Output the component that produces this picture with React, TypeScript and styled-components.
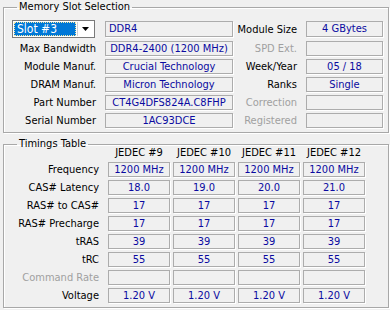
import React from 'react';
import styled, { createGlobalStyle } from 'styled-components';

const GlobalStyle = createGlobalStyle`
  html, body {
    margin: 0;
    padding: 0;
    background: #f0f0f0;
  }
  body {
    font-family: "DejaVu Sans Condensed", "DejaVu Sans", "Liberation Sans", sans-serif;
    font-stretch: condensed;
    font-size: 11px;
    color: #000;
  }
`;

const Page = styled.div`
  width: 390px;
  height: 310px;
  padding: 0 1px 0 3px;
  box-sizing: border-box;
`;

const Group = styled.fieldset<{ $gap?: number }>`
  margin: ${(p) => p.$gap || 0}px 0 0 0;
  padding: 6px 6px 4px 8px;
  border: 1px solid #a8a8a8;
  box-shadow: inset 1px 1px 0 #fff, 1px 1px 0 #fff;
  min-width: 0;
`;

const Title = styled.legend`
  padding: 0 2px;
  margin-left: 5px;
  line-height: 14px;
  height: 14px;
`;

const SlotGrid = styled.div`
  display: grid;
  grid-template-columns: 93px 128px 73px 77px;
  grid-template-rows: 18px repeat(5, 15px);
  row-gap: 3px;
  align-items: center;
`;

const Label = styled.div<{ $disabled?: boolean }>`
  text-align: right;
  padding-right: 9px;
  white-space: nowrap;
  line-height: 15px;
  color: ${(p) => (p.$disabled ? '#a0a0a0' : '#000')};
`;

const Field = styled.div<{ $align?: 'left' | 'center'; $tall?: boolean }>`
  height: ${(p) => (p.$tall ? 16 : 15)}px;
  box-sizing: border-box;
  border: 1px solid #acacac;
  box-shadow: 1px 1px 0 #fff;
  color: #0a0aa0;
  text-align: ${(p) => p.$align || 'center'};
  padding: 0 ${(p) => (p.$align === 'left' ? 3 : 0)}px;
  line-height: ${(p) => (p.$tall ? 14 : 13)}px;
  white-space: nowrap;
  overflow: hidden;
`;

const Select = styled.div`
  width: 83px;
  height: 18px;
  box-sizing: border-box;
  border: 1px solid #7a7a7a;
  background: #fff;
  display: flex;
  padding: 1px;
  gap: 1px;
`;

const SelectValue = styled.div`
  flex: 1;
  background: #0078d7;
  color: #fff;
  border: 1px dotted #f7e8a0;
  line-height: 12px;
  padding-left: 2px;
  font-size: 12px;
`;

const SelectButton = styled.div`
  width: 15px;
  display: flex;
  align-items: center;
  justify-content: center;
  background: #fff;
  border-left: 1px solid #d0d0d0;
`;

const TimingGrid = styled.div`
  display: grid;
  grid-template-columns: 93px repeat(4, 62px);
  grid-template-rows: 12px repeat(8, 15px);
  column-gap: 3px;
  row-gap: 3px;
  align-items: center;
  margin-top: -10px;
  & > :nth-child(5n + 1) {
    margin-right: -3px;
  }
`;

const ColHead = styled.div`
  text-align: center;
  line-height: 12px;
  white-space: nowrap;
`;

const Arrow = () => (
  <svg width="7" height="4" viewBox="0 0 7 4">
    <path d="M0 0H7L3.5 4Z" fill="#000" />
  </svg>
);

type SlotRow = { label: string; value: string; rlabel: string; rvalue: string; rdisabled?: boolean };

const slotRows: SlotRow[] = [
  { label: 'Max Bandwidth', value: 'DDR4-2400 (1200 MHz)', rlabel: 'SPD Ext.', rvalue: '', rdisabled: true },
  { label: 'Module Manuf.', value: 'Crucial Technology', rlabel: 'Week/Year', rvalue: '05 / 18' },
  { label: 'DRAM Manuf.', value: 'Micron Technology', rlabel: 'Ranks', rvalue: 'Single' },
  { label: 'Part Number', value: 'CT4G4DFS824A.C8FHP', rlabel: 'Correction', rvalue: '', rdisabled: true },
  { label: 'Serial Number', value: '1AC93DCE', rlabel: 'Registered', rvalue: '', rdisabled: true },
];

const jedec = ['JEDEC #9', 'JEDEC #10', 'JEDEC #11', 'JEDEC #12'];

const timings: { label: string; values: string[]; disabled?: boolean }[] = [
  { label: 'Frequency', values: ['1200 MHz', '1200 MHz', '1200 MHz', '1200 MHz'] },
  { label: 'CAS# Latency', values: ['18.0', '19.0', '20.0', '21.0'] },
  { label: 'RAS# to CAS#', values: ['17', '17', '17', '17'] },
  { label: 'RAS# Precharge', values: ['17', '17', '17', '17'] },
  { label: 'tRAS', values: ['39', '39', '39', '39'] },
  { label: 'tRC', values: ['55', '55', '55', '55'] },
  { label: 'Command Rate', values: ['', '', '', ''], disabled: true },
  { label: 'Voltage', values: ['1.20 V', '1.20 V', '1.20 V', '1.20 V'] },
];

export default function App() {
  return (
    <Page>
      <GlobalStyle />
      <Group>
        <Title>Memory Slot Selection</Title>
        <SlotGrid>
          <Select>
            <SelectValue>Slot #3</SelectValue>
            <SelectButton>
              <Arrow />
            </SelectButton>
          </Select>
          <Field $align="left" $tall>
            DDR4
          </Field>
          <Label>Module Size</Label>
          <Field $tall>4 GBytes</Field>
          {slotRows.map((r) => (
            <React.Fragment key={r.label}>
              <Label>{r.label}</Label>
              <Field>{r.value}</Field>
              <Label $disabled={r.rdisabled}>{r.rlabel}</Label>
              <Field>{r.rvalue}</Field>
            </React.Fragment>
          ))}
        </SlotGrid>
      </Group>
      <Group $gap={4}>
        <Title>Timings Table</Title>
        <TimingGrid>
          <div />
          {jedec.map((j) => (
            <ColHead key={j}>{j}</ColHead>
          ))}
          {timings.map((t) => (
            <React.Fragment key={t.label}>
              <Label $disabled={t.disabled}>{t.label}</Label>
              {t.values.map((v, i) => (
                <Field key={i}>{v}</Field>
              ))}
            </React.Fragment>
          ))}
        </TimingGrid>
      </Group>
    </Page>
  );
}
